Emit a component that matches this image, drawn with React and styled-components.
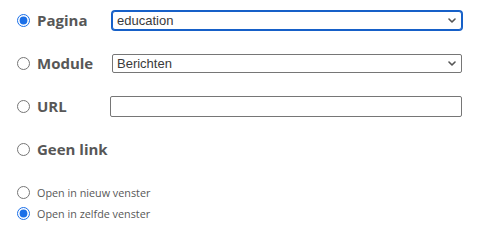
import React, { useState } from 'react'
import styled, { createGlobalStyle } from 'styled-components'

// GLOBAL
const GlobalStyle = createGlobalStyle`
    html, body {
        margin: 0;
        padding: 0;
        background: #ffffff;
    }
    body {
        font-family: "Open Sans", "Liberation Sans", Arial, sans-serif;
        color: #555555;
    }
`;

// STYLED COMPONENTS
const Form = styled.form`
    display: flex;
    flex-direction: column;
    width: 477px;
    padding: 5px 15px 0 12px;
    box-sizing: border-box;
`;
const LinkRows = styled.div`
    display: flex;
    flex-direction: column;
    gap: 13px;
`;
const LinkRow = styled.div`
    display: grid;
    grid-template-columns: ${props => props.$wide ? '98px' : '100px'} 1fr;
    align-items: center;
    height: 30px;
`;
const Choice = styled.label`
    display: flex;
    align-items: center;
    cursor: pointer;
`;
const Radio = styled.input.attrs({ type: 'radio' })`
    width: 13px;
    height: 13px;
    margin: 0 7px 0 5px;
    accent-color: #1a6fe8;
    flex: none;
`;
const BigLabel = styled.span`
    font-size: 15px;
    font-weight: 700;
    color: #575757;
`;
const SelectWrap = styled.div`
    position: relative;
    display: flex;
    height: 19px;
`;
const Select = styled.select`
    appearance: none;
    -webkit-appearance: none;
    width: 100%;
    height: 19px;
    box-sizing: border-box;
    margin: 0;
    padding: 0 20px 0 4px;
    background: #ffffff;
    font-family: "Liberation Sans", Arial, sans-serif;
    font-size: 13px;
    color: #3a3a3a;
    outline: none;
    border: 1px solid ${props => props.$focused ? '#1660c8' : '#767676'};
    box-shadow: ${props => props.$focused ? '0 0 0 1px #1660c8' : 'none'};
    border-radius: ${props => props.$focused ? '3px' : '2px'};
`;
const Chevron = styled.svg`
    position: absolute;
    right: 6px;
    top: 7px;
    width: 8px;
    height: 5px;
    pointer-events: none;
`;
const TextInput = styled.input.attrs({ type: 'text' })`
    width: 100%;
    height: 21px;
    box-sizing: border-box;
    margin: 0;
    padding: 0 4px;
    border: 1px solid #767676;
    border-radius: 2px;
    font-family: "Liberation Sans", Arial, sans-serif;
    font-size: 13px;
    outline: none;
`;
const Targets = styled.div`
    display: flex;
    flex-direction: column;
    margin-top: 18px;
`;
const TargetRow = styled.label`
    display: flex;
    align-items: center;
    height: 21px;
    cursor: pointer;
`;
const SmallLabel = styled.span`
    font-size: 10.8px;
    color: #575757;
`;

// COMPONENTS
function DropDown({ value, options, focused, onChange }) {
    return (
        <SelectWrap>
            <Select value={value} $focused={focused} onChange={e => onChange(e.target.value)}>
                {options.map(o => <option key={o}>{o}</option>)}
            </Select>
            <Chevron viewBox="0 0 8 5">
                <path d="M1 1 L4 4 L7 1" fill="none" stroke="#555" strokeWidth="1.6" strokeLinecap="round" strokeLinejoin="round" />
            </Chevron>
        </SelectWrap>
    )
}

// COMPONENT TO EXPORT
export default function App() {
    const [linkType, setLinkType] = useState('pagina')
    const [target, setTarget] = useState('zelfde')
    const [page, setPage] = useState('education')
    const [module, setModule] = useState('Berichten')
    const [url, setUrl] = useState('')
    // -- //
    return (
        <>
            <GlobalStyle />
            <Form onSubmit={e => e.preventDefault()}>
                <LinkRows>
                    <LinkRow>
                        <Choice>
                            <Radio name="link" checked={linkType === 'pagina'} onChange={() => setLinkType('pagina')} />
                            <BigLabel>Pagina</BigLabel>
                        </Choice>
                        <DropDown value={page} focused options={['education', 'home', 'contact']} onChange={setPage} />
                    </LinkRow>
                    <LinkRow>
                        <Choice>
                            <Radio name="link" checked={linkType === 'module'} onChange={() => setLinkType('module')} />
                            <BigLabel>Module</BigLabel>
                        </Choice>
                        <DropDown value={module} options={['Berichten', 'Agenda', 'Fotoalbum']} onChange={setModule} />
                    </LinkRow>
                    <LinkRow $wide>
                        <Choice>
                            <Radio name="link" checked={linkType === 'url'} onChange={() => setLinkType('url')} />
                            <BigLabel>URL</BigLabel>
                        </Choice>
                        <TextInput value={url} onChange={e => setUrl(e.target.value)} />
                    </LinkRow>
                    <LinkRow>
                        <Choice>
                            <Radio name="link" checked={linkType === 'geen'} onChange={() => setLinkType('geen')} />
                            <BigLabel>Geen link</BigLabel>
                        </Choice>
                    </LinkRow>
                </LinkRows>

                <Targets>
                    <TargetRow>
                        <Radio name="target" checked={target === 'nieuw'} onChange={() => setTarget('nieuw')} />
                        <SmallLabel>Open in nieuw venster</SmallLabel>
                    </TargetRow>
                    <TargetRow>
                        <Radio name="target" checked={target === 'zelfde'} onChange={() => setTarget('zelfde')} />
                        <SmallLabel>Open in zelfde venster</SmallLabel>
                    </TargetRow>
                </Targets>
            </Form>
        </>
    )
}
